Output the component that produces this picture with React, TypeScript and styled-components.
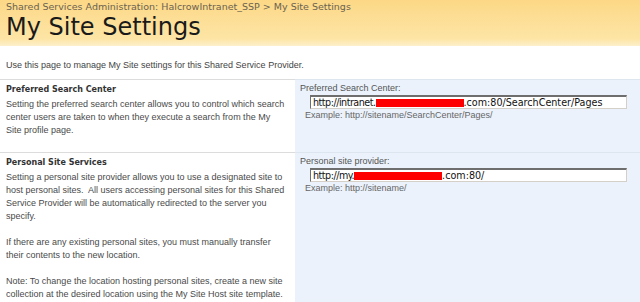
import styled, { createGlobalStyle } from "styled-components";

const GlobalStyle = createGlobalStyle`
  html, body {
    margin: 0;
    padding: 0;
    background: #ffffff;
  }
  body {
    font-family: "Liberation Sans", Arial, sans-serif;
  }
`;

type Section = {
  title: string;
  paragraphs: string[];
  label: string;
  prefix: string;
  suffix: string;
  example: string;
};

const sections: Section[] = [
  {
    title: "Preferred Search Center",
    paragraphs: [
      "Setting the preferred search center allows you to control which search center users are taken to when they execute a search from the My Site profile page.",
    ],
    label: "Preferred Search Center:",
    prefix: "http://intranet.",
    suffix: ".com:80/SearchCenter/Pages",
    example: "Example: http://sitename/SearchCenter/Pages/",
  },
  {
    title: "Personal Site Services",
    paragraphs: [
      "Setting a personal site provider allows you to use a designated site to host personal sites.  All users accessing personal sites for this Shared Service Provider will be automatically redirected to the server you specify.",
      "If there are any existing personal sites, you must manually transfer their contents to the new location.",
      "Note: To change the location hosting personal sites, create a new site collection at the desired location using the My Site Host site template.",
    ],
    label: "Personal site provider:",
    prefix: "http://my.",
    suffix: ".com:80/",
    example: "Example: http://sitename/",
  },
];

export default function App() {
  return (
    <Page>
      <GlobalStyle />
      <Header>
        <Breadcrumb>
          Shared Services Administration: HalcrowIntranet_SSP &gt; My Site Settings
        </Breadcrumb>
        <Title>My Site Settings</Title>
      </Header>
      <Intro>Use this page to manage My Site settings for this Shared Service Provider.</Intro>
      <Sections>
        {sections.map((s, i) => (
          <Row key={s.title} $tall={i === 1}>
            <Description>
              <Heading>{s.title}</Heading>
              {s.paragraphs.map((p) => (
                <Para key={p.slice(0, 20)}>{p}</Para>
              ))}
            </Description>
            <Control>
              <Label>{s.label}</Label>
              <Field>
                <Url>{s.prefix}</Url>
                <Redacted />
                {s.suffix}
              </Field>
              <Example>{s.example}</Example>
            </Control>
          </Row>
        ))}
      </Sections>
    </Page>
  );
}

const Page = styled.div`
  width: 640px;
  height: 302px;
  overflow: hidden;
  background: #fff;
`;

const Header = styled.div`
  height: 46px;
  box-sizing: border-box;
  padding: 1px 0 0 6px;
  background: linear-gradient(to bottom, #fcd886 0%, #fde5a6 85%, #fdf0cc 100%);
`;

const Breadcrumb = styled.div`
  font-family: "DejaVu Sans", Verdana, sans-serif;
  font-size: 9.5px;
  line-height: 12px;
  color: #6b6250;
  white-space: nowrap;
`;

const Title = styled.div`
  font-family: "DejaVu Sans", Verdana, sans-serif;
  font-size: 24px;
  line-height: 28px;
  color: #1a1a1a;
  white-space: nowrap;
`;

const Intro = styled.div`
  font-size: 9px;
  line-height: 13px;
  color: #444;
  padding: 13px 6px 7px;
`;

const Sections = styled.div`
  display: flex;
  flex-direction: column;
`;

const Row = styled.div<{ $tall?: boolean }>`
  display: grid;
  grid-template-columns: 295px 1fr;
  height: ${(p) => (p.$tall ? "150px" : "73px")};
`;

const Description = styled.div`
  border-top: 1px solid #dcdcdc;
  padding: 3px 10px 0 6px;
`;

const Heading = styled.div`
  font-family: "DejaVu Sans", Tahoma, sans-serif;
  font-weight: bold;
  font-size: 8px;
  line-height: 13px;
  color: #333;
  margin-bottom: 2px;
`;

const Para = styled.p`
  margin: 0 0 13px;
  font-size: 9px;
  line-height: 13px;
  color: #4a4a4a;
  white-space: pre-wrap;
`;

const Control = styled.div`
  background: #ebf2fc;
  border-top: 1px solid #dde5ef;
  padding: 2px 13px 0 5px;
`;

const Label = styled.div`
  font-size: 9px;
  line-height: 13px;
  color: #555;
`;

const Field = styled.div`
  margin-left: 10px;
  height: 14px;
  box-sizing: border-box;
  background: #fff;
  border-top: 2px solid #6e6e6e;
  border-left: 1px solid #6e6e6e;
  border-right: 1px solid #d4d0c8;
  border-bottom: 1px solid #d4d0c8;
  padding-left: 2px;
  font-family: "DejaVu Sans", Verdana, sans-serif;
  font-size: 9.6px;
  line-height: 11px;
  color: #111;
  white-space: nowrap;
  overflow: hidden;
  display: flex;
  align-items: center;
`;

const Url = styled.span`
  letter-spacing: -0.5px;
`;

const Redacted = styled.span`
  display: inline-block;
  flex: none;
  width: 88px;
  height: 8px;
  background: #f00;
`;

const Example = styled.div`
  margin-left: 5px;
  font-size: 9px;
  line-height: 13px;
  color: #666;
`;
